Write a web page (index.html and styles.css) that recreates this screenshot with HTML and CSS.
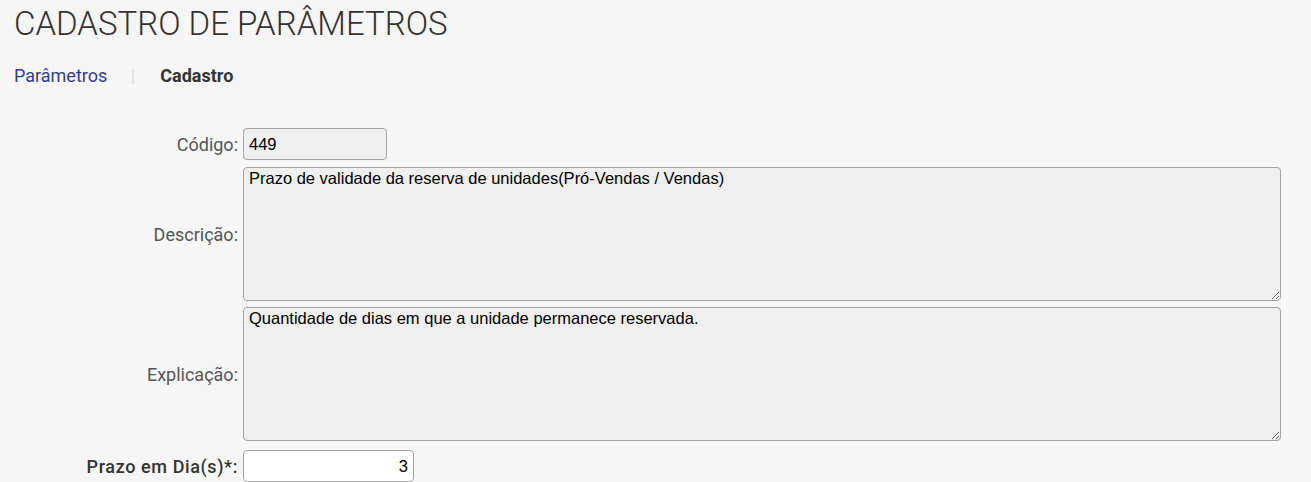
FILE: index.html
```html
<!DOCTYPE html>
<html lang="pt-BR">
<head>
  <meta charset="UTF-8">
  <title>Cadastro de Parâmetros</title>
  <link rel="stylesheet" href="styles.css">
</head>
<body>

<h1 class="page-title">CADASTRO DE PARÂMETROS</h1>

<nav class="breadcrumb">
  <a href="#">Parâmetros</a>
  <span class="sep"></span>
  <span class="current">Cadastro</span>
</nav>

<form class="param-form">
  <div class="row">
    <label for="codigo">Código:</label>
    <input id="codigo" class="field code" type="text" value="449" readonly>
  </div>
  <div class="row">
    <label for="descricao">Descrição:</label>
    <textarea id="descricao" class="field area" readonly>Prazo de validade da reserva de unidades(Pró-Vendas / Vendas)</textarea>
  </div>
  <div class="row">
    <label for="explicacao">Explicação:</label>
    <textarea id="explicacao" class="field area" readonly>Quantidade de dias em que a unidade permanece reservada.</textarea>
  </div>
  <div class="row required">
    <label for="prazo">Prazo em Dia(s)*:</label>
    <input id="prazo" class="field days" type="text" value="3">
  </div>
</form>

</body>
</html>
```

FILE: styles.css
```css
:root {
  --page-bg: #f6f6f6;
  --field-bg: #efefef;
  --border-color: #a3a3a3;
  --label-color: #555;
  --link-color: #2f3f8f;
}

body {
  margin: 0;
  padding: 0 14px;
  background-color: var(--page-bg);
  font-family: Roboto, "Noto Sans", sans-serif;
  color: #333;
}

.page-title {
  margin: 0;
  padding-top: 5px;
  font-size: 33px;
  font-weight: 300;
  line-height: 38px;
  color: #333;
}

.breadcrumb {
  display: flex;
  align-items: center;
  margin-top: 23px;
  font-size: 18px;
  line-height: 20px;
}

.breadcrumb a {
  color: var(--link-color);
  text-decoration: none;
}

.breadcrumb .sep {
  width: 2px;
  height: 15px;
  margin: 0 26px 0 25px;
  background-color: #e2e2e2;
}

.breadcrumb .current {
  font-weight: 700;
  color: #333;
}

.param-form {
  margin-top: 42px;
}

.row {
  display: grid;
  grid-template-columns: 224px 1fr;
  column-gap: 5px;
  align-items: center;
  margin-bottom: 6px;
}

.row:first-child {
  margin-bottom: 7px;
}

.row label {
  text-align: right;
  font-size: 18px;
  color: var(--label-color);
}

.required {
  margin-top: 9px;
}

.required label {
  font-weight: 500;
  letter-spacing: 0.6px;
  color: #333;
}

.field {
  box-sizing: border-box;
  margin: 0;
  padding: 4px 5px;
  background-color: var(--field-bg);
  border: 1px solid var(--border-color);
  border-radius: 4px;
  font-family: "Liberation Sans", Arial, sans-serif;
  font-size: 16.5px;
  color: #000;
}

.code {
  width: 144px;
  height: 32px;
}

.area {
  display: block;
  width: 1038px;
  height: 134px;
  padding: 1px 5px;
  resize: vertical;
}

.days {
  width: 171px;
  height: 32px;
  text-align: right;
  background-color: #fff;
}
```
